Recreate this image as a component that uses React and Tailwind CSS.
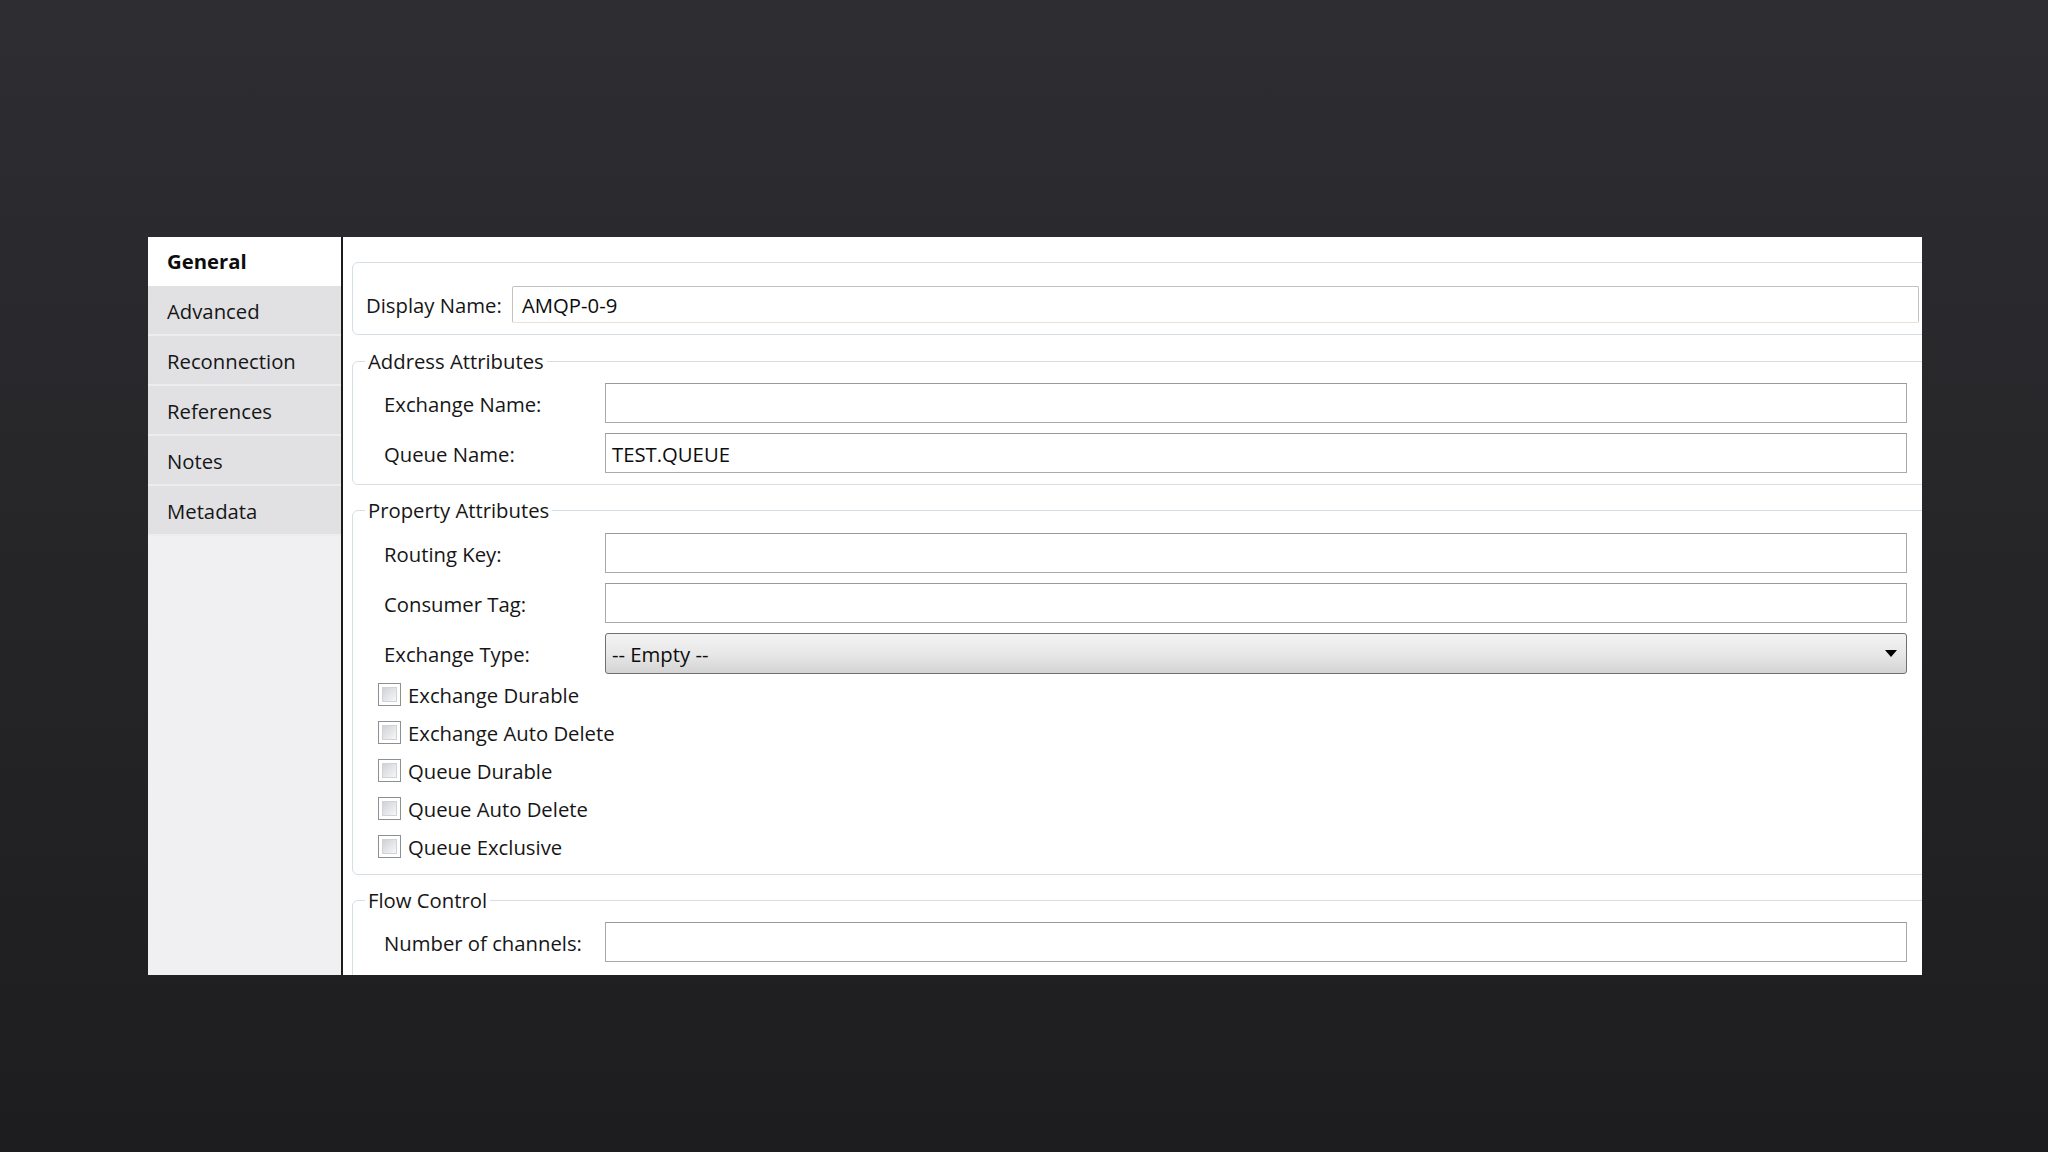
import React from "react";

const font = "font-['Open_Sans','Liberation_Sans',sans-serif]";

const tabs = ["General", "Advanced", "Reconnection", "References", "Notes", "Metadata"];

const TextBox = ({ value }) => (
  <div className="flex-1 h-[40px] border border-[#a9a9a9] border-t-[#9a9a9a] bg-white flex items-center pl-[6px] pt-[2px] text-[#0d0d0d]">
    {value}
  </div>
);

const Row = ({ label, value }) => (
  <div className="flex items-center">
    <div className="w-[221px] shrink-0 pt-[2px] text-[#161616]">{label}</div>
    <TextBox value={value} />
  </div>
);

const Group = ({ title, className = "", children }) => (
  <fieldset className={`border border-[#d5dfe5] rounded-[6px] pl-[31px] pr-[21px] ${className}`}>
    <legend className="-ml-[19px] px-[3px] leading-[28px] text-[#161616]">{title}</legend>
    {children}
  </fieldset>
);

const Check = ({ label }) => (
  <div className="h-[38px] flex items-center -ml-[6px]">
    <div className="w-[23px] h-[23px] border border-[#8e8f8f] bg-white p-[3px] shrink-0">
      <div className="w-full h-full border border-[#d0d3d8] bg-linear-to-br from-[#cfd2d7] to-[#f7f7f7]" />
    </div>
    <span className="ml-[7px] pt-[2px] text-[#161616]">{label}</span>
  </div>
);

const Sidebar = () => (
  <div className="w-[193px] shrink-0 bg-[#f0f0f3] flex flex-col">
    {tabs.map((t, i) =>
      i === 0 ? (
        <div key={t} className="h-[49px] bg-white flex items-center pl-[19px] font-bold text-[#0d0d0d]">
          {t}
        </div>
      ) : (
        <div
          key={t}
          className="h-[50px] bg-[#e1e1e4] border-b-2 border-[#ededf0] flex items-center pl-[19px] pt-[2px] text-[#161616]"
        >
          {t}
        </div>
      )
    )}
  </div>
);

export default function App() {
  return (
    <div className={`w-full h-[1152px] bg-linear-to-b from-[#2e2d31] to-[#1d1d1f] pt-[237px] pl-[148px] ${font} text-[20.3px]`}>
      <div className="w-[1774px] h-[738px] flex bg-white">
        <Sidebar />
        <div className="w-[2px] bg-[#1c1c1c] shrink-0" />
        <div className="flex-1 overflow-hidden bg-white">
          <div className="w-[1586px] pl-[9px] pt-[25px]">
            {/* display name box */}
            <div className="border border-[#d5dfe5] rounded-[6px] pt-[23px] pb-[11px] pl-[13px] pr-[9px] flex items-center">
              <div className="w-[146px] shrink-0 pt-[1px] text-[#161616]">Display Name:</div>
              <div className="flex-1 h-[37px] border border-[#c2c2c2] border-b-[#e2e2e2] rounded-[2px] flex items-center pl-[9px] pt-[1px] text-[#0d0d0d]">
                AMQP-0-9
              </div>
            </div>

            <Group title="Address Attributes" className="mt-[12px] pt-[8px] pb-[11px]">
              <div className="flex flex-col gap-[10px]">
                <Row label="Exchange Name:" value="" />
                <Row label="Queue Name:" value="TEST.QUEUE" />
              </div>
            </Group>

            <Group title="Property Attributes" className="mt-[11px] pt-[9px] pb-[9px]">
              <div className="flex flex-col gap-[10px]">
                <Row label="Routing Key:" value="" />
                <Row label="Consumer Tag:" value="" />
                <div className="flex items-center">
                  <div className="w-[221px] shrink-0 pt-[2px] text-[#161616]">Exchange Type:</div>
                  <div className="flex-1 h-[41px] border border-[#707070] rounded-[3px] bg-linear-to-b from-[#f3f3f3] via-[#e8e8e8] to-[#d4d4d4] flex items-center pl-[6px] pr-[9px] text-[#0d0d0d]">
                    <span className="flex-1 pt-[2px]">-- Empty --</span>
                    <svg width="12" height="7" viewBox="0 0 12 7">
                      <path d="M0 0 H12 L6 7 Z" fill="#000" />
                    </svg>
                  </div>
                </div>
              </div>
              <div className="mt-[1px] flex flex-col">
                <Check label="Exchange Durable" />
                <Check label="Exchange Auto Delete" />
                <Check label="Queue Durable" />
                <Check label="Queue Auto Delete" />
                <Check label="Queue Exclusive" />
              </div>
            </Group>

            <Group title="Flow Control" className="mt-[11px] pt-[8px] pb-[20px]">
              <Row label="Number of channels:" value="" />
            </Group>
          </div>
        </div>
      </div>
    </div>
  );
}
